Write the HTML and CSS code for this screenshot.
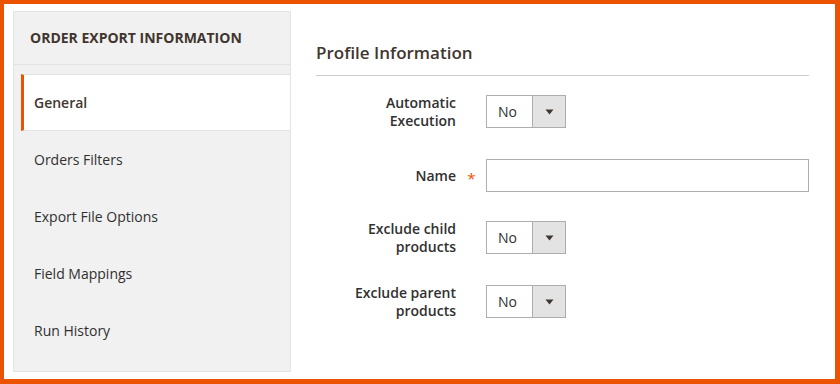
FILE: index.html
```html
<!DOCTYPE html>
<html>
<head>
<meta charset="utf-8">
<link rel="stylesheet" href="styles.css">
</head>
<body>
<div class="frame">
  <aside class="nav">
    <div class="nav-title">ORDER EXPORT INFORMATION</div>
    <ul class="nav-items">
      <li class="nav-item active">General</li>
      <li class="nav-item">Orders Filters</li>
      <li class="nav-item">Export File Options</li>
      <li class="nav-item">Field Mappings</li>
      <li class="nav-item">Run History</li>
    </ul>
  </aside>
  <main class="main">
    <div class="section-title">Profile Information</div>
    <div class="form">
      <div class="field">
        <div class="label">Automatic<br>Execution</div>
        <div class="marker"></div>
        <div class="select"><span class="select-value">No</span><span class="select-arrow"><svg width="9" height="6" viewBox="0 0 9 6"><path d="M0.5 0.5 H8.5 L4.5 5.5 Z" fill="#41362f"/></svg></span></div>
      </div>
      <div class="field">
        <div class="label">Name</div>
        <div class="marker"><span class="req">*</span></div>
        <div class="input"></div>
      </div>
      <div class="field field-tight">
        <div class="label">Exclude child<br>products</div>
        <div class="marker"></div>
        <div class="select"><span class="select-value">No</span><span class="select-arrow"><svg width="9" height="6" viewBox="0 0 9 6"><path d="M0.5 0.5 H8.5 L4.5 5.5 Z" fill="#41362f"/></svg></span></div>
      </div>
      <div class="field">
        <div class="label">Exclude parent<br>products</div>
        <div class="marker"></div>
        <div class="select"><span class="select-value">No</span><span class="select-arrow"><svg width="9" height="6" viewBox="0 0 9 6"><path d="M0.5 0.5 H8.5 L4.5 5.5 Z" fill="#41362f"/></svg></span></div>
      </div>
    </div>
  </main>
</div>
</body>
</html>
```
FILE: styles.css
```css
* { box-sizing: border-box; }
html, body { margin: 0; padding: 0; background: #fff; }
body {
  font-family: "Open Sans", "Noto Sans", sans-serif;
  color: #303030;
  font-size: 14px;
}
.frame {
  width: 840px;
  height: 384px;
  border-style: solid;
  border-color: #eb5202;
  border-width: 4px 5px 5px 4px;
  display: flex;
  align-items: flex-start;
  padding: 7px 0 0 9px;
  gap: 25px;
  overflow: hidden;
}
.nav {
  width: 278px;
  flex: none;
  background: #f1f1f1;
  border: 1px solid #e3e3e3;
  padding-bottom: 12px;
}
.nav-title {
  font-weight: 700;
  font-size: 14px;
  line-height: 20px;
  color: #41362f;
  padding: 16px;
  border-bottom: 1px solid #e3e3e3;
}
.nav-items {
  list-style: none;
  margin: 9px 0 0 0;
  padding: 0;
}
.nav-item {
  margin-left: 7px;
  height: 57px;
  line-height: 57px;
  padding-left: 10px;
  border-left: 3px solid transparent;
  font-size: 14px;
  color: #303030;
}
.nav-item.active {
  background: #fff;
  border-left-color: #eb5202;
  border-top: 1px solid #e3e3e3;
  border-bottom: 1px solid #e3e3e3;
  line-height: 55px;
  font-weight: 600;
  color: #41362f;
}
.main {
  width: 493px;
  padding-top: 30px;
}
.section-title {
  font-size: 17px;
  font-weight: 600;
  line-height: 24px;
  color: #41362f;
  padding-bottom: 10px;
  border-bottom: 1px solid #ccc;
}
.form {
  margin-top: 19px;
  display: flex;
  flex-direction: column;
  gap: 31px;
}
.field {
  display: flex;
  align-items: center;
  height: 33px;
}
.field-tight { margin-top: -2px; }
.label {
  width: 140px;
  flex: none;
  text-align: right;
  font-weight: 600;
  font-size: 14px;
  line-height: 18px;
  color: #303030;
}
.marker {
  width: 30px;
  flex: none;
  text-align: center;
  padding-left: 1px;
}
.req {
  color: #eb5202;
  font-size: 15px;
  font-weight: 400;
  position: relative;
  top: 2px;
}
.select {
  display: flex;
  width: 80px;
  height: 33px;
  border: 1px solid #adadad;
  background: #fff;
}
.select-value {
  width: 45px;
  flex: none;
  padding-left: 11px;
  line-height: 31px;
  font-size: 14px;
  color: #303030;
}
.select-arrow {
  flex: 1;
  background: #e3e3e3;
  border-left: 1px solid #adadad;
  display: flex;
  align-items: center;
  justify-content: center;
}
.input {
  width: 323px;
  height: 33px;
  border: 1px solid #adadad;
  background: #fff;
}
```
